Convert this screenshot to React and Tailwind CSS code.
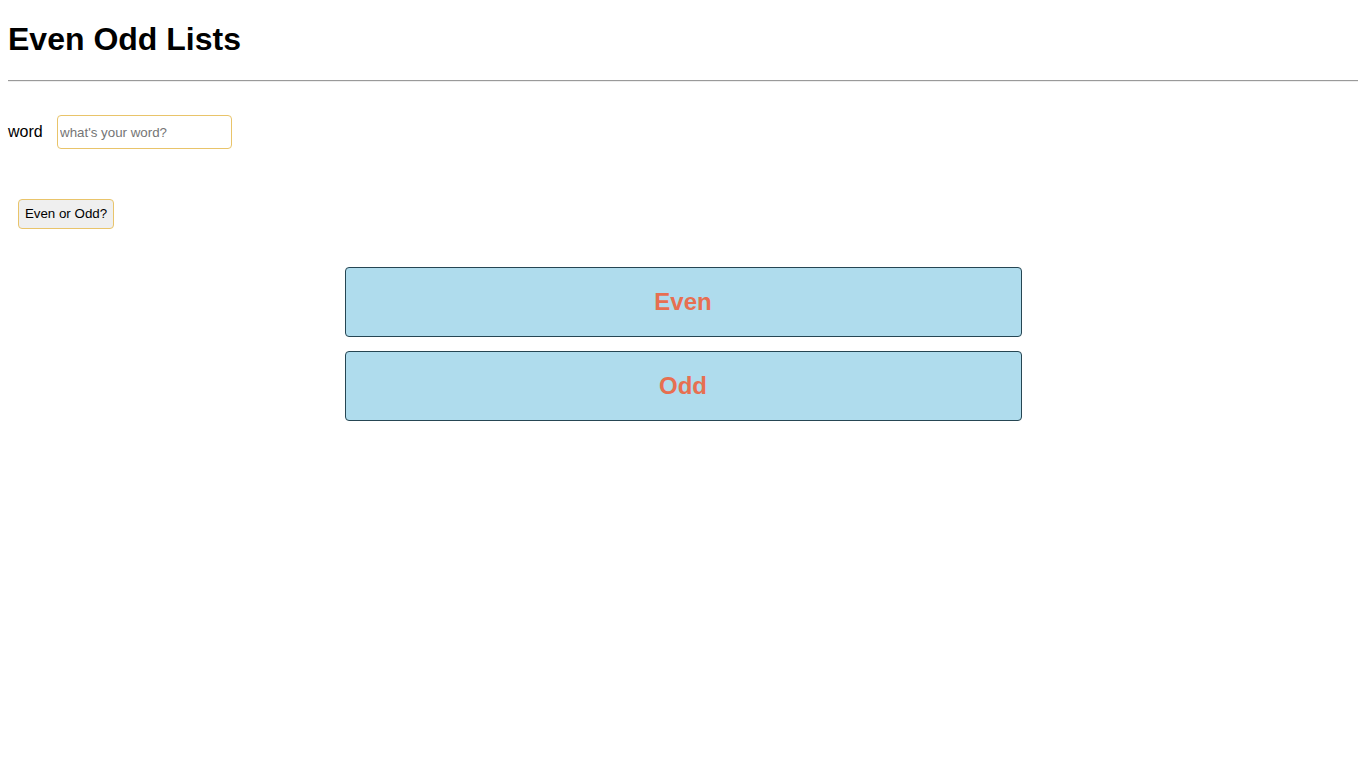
import { useState } from "react";

function ResultBox({ label }) {
  return (
    <div className="mx-auto flex h-[70px] w-[677px] items-center justify-center rounded-[4px] border border-[#264653] bg-[#afdced]">
      <span className="text-[24px] font-bold text-[#e76f51]">{label}</span>
    </div>
  );
}

function App() {
  const [word, setWord] = useState("");

  return (
    <div
      className="min-h-screen bg-white px-2 pt-[21px] text-black"
      style={{ fontFamily: '"Liberation Sans", Arial, sans-serif' }}
    >
      <h1 className="text-[32px] font-bold leading-[37px]">Even Odd Lists</h1>
      <hr className="mt-[22px] h-[2px] border-0 border-t border-b border-t-[#9a9a9a] border-b-[#eeeeee]" />

      <div className="mt-[33px] flex items-center">
        <label htmlFor="word" className="w-[49px] text-[16px]">
          word
        </label>
        <input
          id="word"
          type="text"
          value={word}
          onChange={(e) => setWord(e.target.value)}
          placeholder="what's your word?"
          className="h-[34px] w-[175px] rounded-[4px] border border-[#e9c46a] px-[2px] text-[13.33px] outline-none placeholder:text-[#757575]"
        />
      </div>

      <button className="ml-[10px] mt-[50px] h-[30px] w-[96px] rounded-[4px] border border-[#e9c46a] bg-[#efefef] text-[13.33px]">
        Even or Odd?
      </button>

      <div className="mt-[38px] flex flex-col gap-[14px]">
        <ResultBox label="Even" />
        <ResultBox label="Odd" />
      </div>
    </div>
  );
}

export default App;
